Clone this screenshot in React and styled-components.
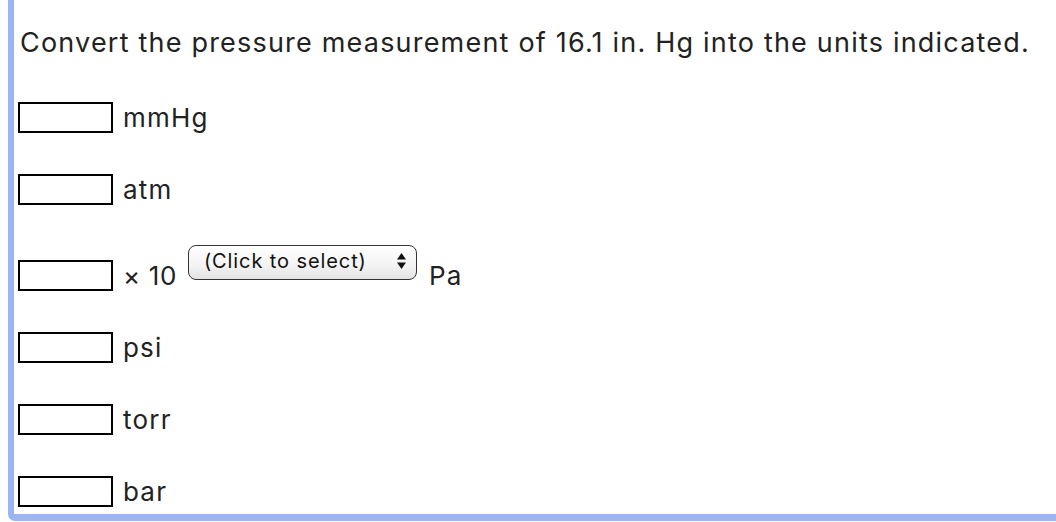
import React from 'react';
import styled, { createGlobalStyle } from 'styled-components';

const GlobalStyle = createGlobalStyle`
  html, body {
    margin: 0;
    padding: 0;
    background: #fff;
  }
  body {
    font-family: Inter, "Open Sans", sans-serif;
    color: #222;
  }
`;

const Panel = styled.section`
  box-sizing: border-box;
  margin-left: 8px;
  height: 521px;
  padding: 17px 0 0 4px;
  border-left: 6px solid #9bb4f4;
  border-bottom: 7px solid #9bb4f4;
  border-bottom-left-radius: 7px;
  overflow: hidden;
`;

const Question = styled.p`
  margin: 0 0 0 2px;
  font-size: 27px;
  line-height: 52px;
  letter-spacing: 1.2px;
  white-space: nowrap;
`;

const Rows = styled.div`
  display: flex;
  flex-direction: column;
  margin-top: 33px;
  gap: 41px;
`;

const Row = styled.div`
  display: flex;
  align-items: center;
  height: 31px;
  margin-top: ${(p) => p.$mt || 0}px;
  font-size: 26px;
  letter-spacing: 1.2px;
`;

const Blank = styled.input`
  box-sizing: border-box;
  width: 95px;
  height: 31px;
  margin: 0 10px 0 0;
  border: 2px solid #000;
  border-radius: 0;
  background: #fff;
  outline: none;
`;

const Times = styled.span`
  margin-right: 11px;
  letter-spacing: 0.6px;
`;

const Select = styled.span`
  box-sizing: border-box;
  display: inline-flex;
  align-items: center;
  justify-content: space-between;
  width: 229px;
  height: 35px;
  margin: -27px 12px 0 0;
  padding: 0 9px 3px 15px;
  border: 1.5px solid #333;
  border-radius: 8px;
  background: linear-gradient(#ffffff, #f3f3f3 60%, #e2e2e2);
  font-size: 20px;
  letter-spacing: 0.9px;
  color: #111;
`;

const Arrows = () => (
  <svg width="11" height="18" viewBox="0 0 11 18">
    <path d="M5.5 1 L10 7.5 H1 Z" fill="#111" />
    <path d="M5.5 17 L10 10.5 H1 Z" fill="#111" />
  </svg>
);

const units = ['mmHg', 'atm', 'pa', 'psi', 'torr', 'bar'];

export default function App() {
  return (
    <>
      <GlobalStyle />
      <Panel>
        <Question>
          Convert the pressure measurement of 16.1 in. Hg into the units indicated.
        </Question>
        <Rows>
          {units.map((u) =>
            u === 'pa' ? (
              <Row key={u} $mt={14}>
                <Blank />
                <Times>× 10</Times>
                <Select>
                  (Click to select)
                  <Arrows />
                </Select>
                Pa
              </Row>
            ) : (
              <Row key={u}>
                <Blank />
                {u}
              </Row>
            )
          )}
        </Rows>
      </Panel>
    </>
  );
}
